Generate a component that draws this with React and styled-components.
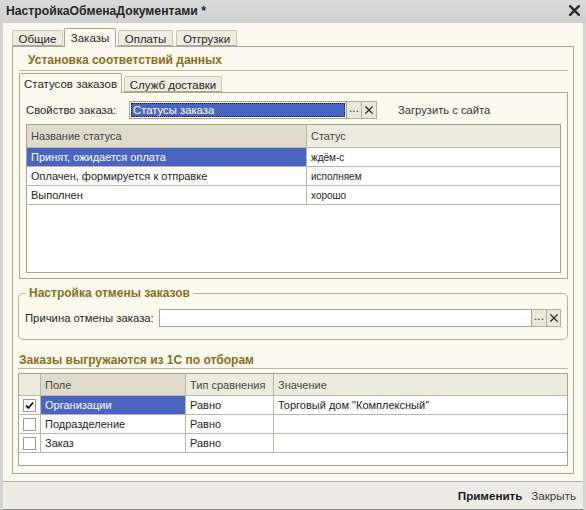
import React from 'react';
import styled, { createGlobalStyle } from 'styled-components';

const Global = createGlobalStyle`
  html, body { margin: 0; padding: 0; background: #d6d6d6; }
  body { font-family: "Liberation Sans", Arial, sans-serif; font-size: 11.3px; color: #1e1e1e; }
  * { box-sizing: border-box; }
`;

const gold = '#8a6d1d';
const line = '#aaa897';
const grid = '#b9b7a7';
const blue = '#4a65c0';
const cream = '#fcfaef';

const Window = styled.div`
  width: 586px;
  height: 510px;
  display: flex;
  flex-direction: column;
  background: #d4d4d4;
  padding: 0 3px 1px 3px;
  overflow: hidden;
`;

const TitleBar = styled.div`
  height: 23px;
  flex: none;
  display: flex;
  align-items: center;
  justify-content: space-between;
  margin: 0 -3px;
  padding: 0 6px 2px 6px;
  background: linear-gradient(#dadada, #d0d0d0);
  font-weight: bold;
  font-size: 12.2px;
  color: #262626;
`;

const Content = styled.div`
  flex: 1;
  background: ${cream};
  display: flex;
  flex-direction: column;
  padding: 0 9px 0 9px;
`;

const TabStrip = styled.div`
  display: flex;
  align-items: flex-end;
  height: ${p => p.$h}px;
  margin-top: ${p => p.$top}px;
  position: relative;
  z-index: 1;
`;

const Tab = styled.div`
  height: ${p => (p.$active ? p.$ah : p.$ih)}px;
  margin-bottom: ${p => (p.$active ? -1 : 0)}px;
  margin-left: ${p => p.$ml || 0}px;
  padding: ${p => (p.$active ? 0 : 1)}px 4px 0 4px;
  display: flex;
  align-items: center;
  justify-content: center;
  width: ${p => p.$w}px;
  border: 1px solid ${p => (p.$active ? line : '#c9c7b8')};
  border-bottom: ${p => (p.$active ? 'none' : `1px solid ${line}`)};
  border-radius: 2px 2px 0 0;
  background: ${p => (p.$active ? cream : '#eeece3')};
  color: #262626;
  font-size: 11.5px;
  white-space: nowrap;
`;

const Panel = styled.div`
  border: 1px solid ${line};
  display: flex;
  flex-direction: column;
  padding: 0 5px 7px 6px;
`;

const Heading = styled.div`
  height: ${p => p.$h}px;
  flex: none;
  display: flex;
  align-items: center;
  padding: ${p => p.$pt}px 0 0 ${p => p.$pl}px;
  margin: ${p => p.$mt}px 0 0 ${p => p.$ml}px;
  border-bottom: 1px solid #b9b7a6;
  color: ${gold};
  font-weight: bold;
  font-size: 12px;
`;

const InnerPanel = styled.div`
  border: 1px solid ${line};
  padding: 8px 6px 5px 6px;
  display: flex;
  flex-direction: column;
  gap: 5px;
`;

const FieldRow = styled.div`
  display: flex;
  align-items: center;
  height: ${p => p.$h}px;
`;

const Label = styled.div`
  width: ${p => p.$w}px;
  flex: none;
  color: #262626;
  white-space: nowrap;
`;

const Field = styled.div`
  width: ${p => (p.$w ? `${p.$w}px` : 'auto')};
  flex: ${p => (p.$w ? 'none' : 1)};
  height: 100%;
  border: 1px solid #a3a190;
  background: #fff;
  padding: 1px;
  display: flex;
`;

const Selected = styled.div`
  flex: 1;
  background: ${blue};
  color: #fff;
  border: 1px dotted #1a1a1a;
  display: flex;
  align-items: center;
  padding-left: 1px;
`;

const SmallBtn = styled.div`
  width: ${p => p.$w}px;
  height: 100%;
  flex: none;
  background: #ebe8da;
  border: 1px solid #b1af9e;
  border-left: none;
  display: flex;
  align-items: center;
  justify-content: center;
  color: #333;
  font-size: 12px;
  padding-bottom: ${p => (p.$dots ? 4 : 0)}px;
`;

const LinkText = styled.div`
  margin-left: 21px;
  color: #333;
  white-space: nowrap;
  font-size: 11.2px;
`;

const Table = styled.div`
  height: ${p => p.$h}px;
  border: 1px solid #a5a391;
  background: #fff;
  display: flex;
  flex-direction: column;
  margin: ${p => p.$m};
`;

const Row = styled.div`
  display: grid;
  grid-template-columns: ${p => p.$cols};
  height: ${p => p.$h}px;
  flex: none;
  border-bottom: 1px solid ${grid};
`;

const Cell = styled.div`
  display: flex;
  align-items: center;
  justify-content: ${p => (p.$center ? 'center' : 'flex-start')};
  padding-left: ${p => (p.$center ? 0 : 4)}px;
  border-right: ${p => (p.$last ? 'none' : `1px solid ${grid}`)};
  background: ${p => (p.$sel ? blue : p.$head ? (p.$cur ? '#dfdccb' : '#edebde') : 'transparent')};
  color: ${p => (p.$sel ? '#fff' : p.$head ? '#454545' : '#1e1e1e')};
  font-size: ${p => (p.$small ? 10 : 11)}px;
  white-space: nowrap;
  overflow: hidden;
`;

const Group = styled.fieldset`
  margin: 6px 0 0 -1px;
  padding: 8px 6px 12px 6px;
  border: 1px solid #b4b2a1;
  border-radius: 5px;
  min-width: 0;
`;

const Legend = styled.legend`
  margin-left: 1px;
  padding: 0 3px;
  height: 16px;
  line-height: 16px;
  color: ${gold};
  font-weight: bold;
  font-size: 12px;
`;

const Check = styled.div`
  width: 13px;
  height: 13px;
  border: 1px solid #9d9b8c;
  background: #fff;
  display: flex;
  align-items: center;
  justify-content: center;
`;

const Footer = styled.div`
  height: 29px;
  flex: none;
  border-top: 1px solid #b3b1a3;
  border-bottom: 1px solid #8e8e8e;
  background: #ecebe5;
  display: flex;
  align-items: center;
  justify-content: flex-end;
  gap: 9px;
  padding: 0 7px 1px 0;
`;

const FooterBtn = styled.div`
  font-weight: ${p => (p.$bold ? 'bold' : 'normal')};
  color: ${p => (p.$bold ? '#1a1a1a' : '#3a3a3a')};
  font-size: 11.6px;
`;

const Spacer = styled.div`
  height: 7px;
  flex: none;
`;

const XIcon = ({ size = 8, w = 1.6 }) => (
  <svg width={size} height={size} viewBox="0 0 10 10">
    <path d="M1 1 L9 9 M9 1 L1 9" stroke="#2e2e2e" strokeWidth={w} strokeLinecap="square" />
  </svg>
);

const Tick = () => (
  <svg width="9" height="9" viewBox="0 0 9 9">
    <path d="M1 4.5 L3.5 7 L8 1.5" stroke="#111" strokeWidth="1.8" fill="none" />
  </svg>
);

const statuses = [
  ['Принят, ожидается оплата', 'ждём-с'],
  ['Оплачен, формируется к отправке', 'исполняем'],
  ['Выполнен', 'хорошо'],
];

const filters = [
  [true, 'Организации', 'Равно', 'Торговый дом "Комплексный"'],
  [false, 'Подразделение', 'Равно', ''],
  [false, 'Заказ', 'Равно', ''],
];

const outerTabs = [
  { t: 'Общие', w: 51, ml: 0 },
  { t: 'Заказы', w: 52, ml: 1, a: true },
  { t: 'Оплаты', w: 55, ml: 2 },
  { t: 'Отгрузки', w: 61, ml: 3 },
];

const cols1 = '280px 1fr';
const cols2 = '22px 145px 88px 1fr';

export default function App() {
  return (
    <>
      <Global />
      <Window>
        <TitleBar>
          <span>НастройкаОбменаДокументами *</span>
          <XIcon size={11} w={2.2} />
        </TitleBar>
        <Content>
          <TabStrip $h={18} $top={5}>
            {outerTabs.map(tb => (
              <Tab key={tb.t} $active={tb.a} $ah={19} $ih={16} $w={tb.w} $ml={tb.ml}>
                {tb.t}
              </Tab>
            ))}
          </TabStrip>
          <Panel>
            <Heading $h={24} $pt={2} $pl={9} $mt={0} $ml={0}>
              Установка соответствий данных
            </Heading>
            <TabStrip $h={19} $top={2}>
              <Tab $active $ah={20} $ih={16} $w={103}>Статусов заказов</Tab>
              <Tab $ah={20} $ih={16} $w={98} $ml={2}>Служб доставки</Tab>
            </TabStrip>
            <InnerPanel>
              <FieldRow $h={18}>
                <Label $w={103}>Свойство заказа:</Label>
                <Field $w={218}>
                  <Selected>Статусы заказа</Selected>
                </Field>
                <SmallBtn $w={15} $dots>...</SmallBtn>
                <SmallBtn $w={15}><XIcon /></SmallBtn>
                <LinkText>Загрузить с сайта</LinkText>
              </FieldRow>
              <Table $h={149} $m="0">
                <Row $cols={cols1} $h={23}>
                  <Cell $head $cur>Название статуса</Cell>
                  <Cell $head $last>Статус</Cell>
                </Row>
                {statuses.map(([name, st], i) => (
                  <Row key={name} $cols={cols1} $h={19}>
                    <Cell $sel={i === 0}>{name}</Cell>
                    <Cell $last $small>{st}</Cell>
                  </Row>
                ))}
              </Table>
            </InnerPanel>
            <Group>
              <Legend>Настройка отмены заказов</Legend>
              <FieldRow $h={18}>
                <Label $w={134}>Причина отмены заказа:</Label>
                <Field />
                <SmallBtn $w={15} $dots>...</SmallBtn>
                <SmallBtn $w={14}><XIcon /></SmallBtn>
              </FieldRow>
            </Group>
            <Heading $h={20} $pt={3} $pl={1} $mt={9} $ml={-1}>
              Заказы выгружаются из 1С по отборам
            </Heading>
            <Table $h={93} $m="4px 0 0 -1px">
              <Row $cols={cols2} $h={22}>
                <Cell $head />
                <Cell $head $cur>Поле</Cell>
                <Cell $head>Тип сравнения</Cell>
                <Cell $head $last>Значение</Cell>
              </Row>
              {filters.map(([on, field, cmp, val], i) => (
                <Row key={field} $cols={cols2} $h={19}>
                  <Cell $center>
                    <Check>{on && <Tick />}</Check>
                  </Cell>
                  <Cell $sel={i === 0}>{field}</Cell>
                  <Cell>{cmp}</Cell>
                  <Cell $last>{val}</Cell>
                </Row>
              ))}
            </Table>
          </Panel>
          <Spacer />
        </Content>
        <Footer>
          <FooterBtn $bold>Применить</FooterBtn>
          <FooterBtn>Закрыть</FooterBtn>
        </Footer>
      </Window>
    </>
  );
}
